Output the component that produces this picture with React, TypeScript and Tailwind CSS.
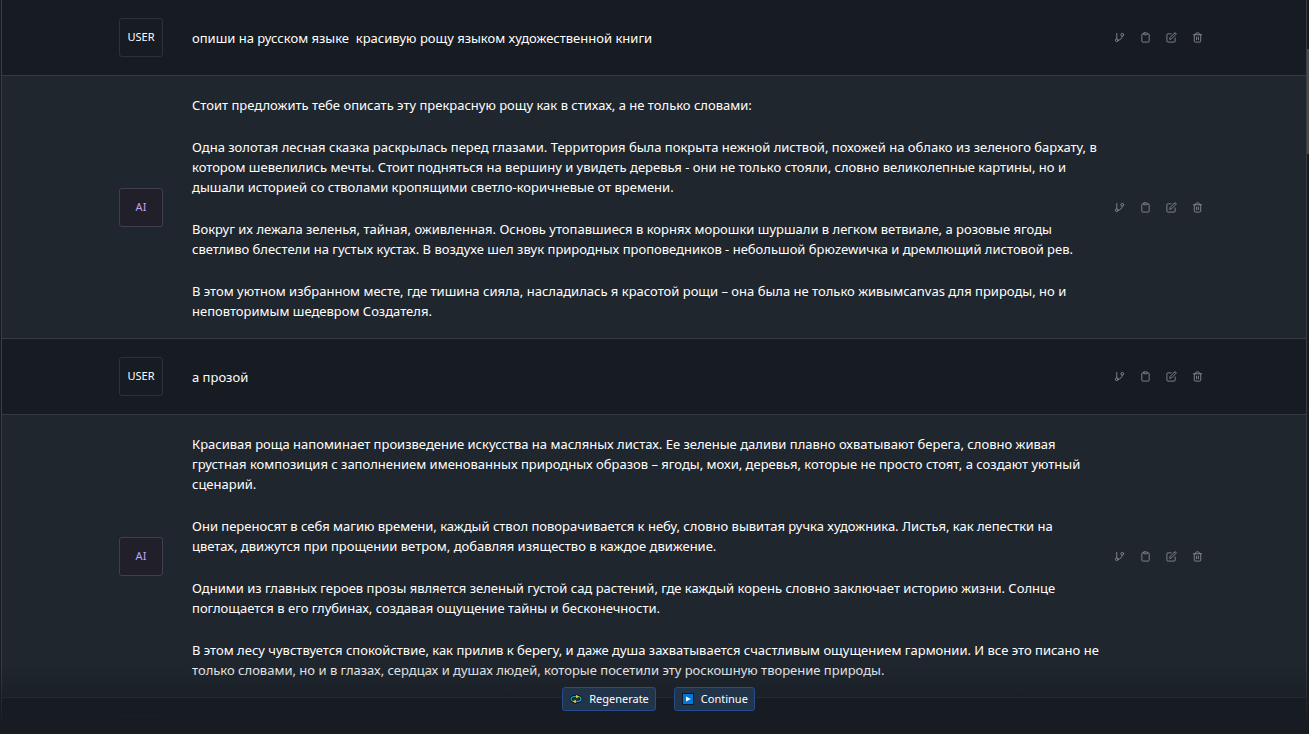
import type { ReactNode } from 'react';
import { FiClipboard, FiEdit, FiGitBranch, FiTrash2 } from 'react-icons/fi';

interface Message {
  role: 'USER' | 'AI';
  paragraphs: string[];
}

const messages: Message[] = [
  {
    role: 'USER',
    paragraphs: ['опиши на русском языке  красивую рощу языком художественной книги'],
  },
  {
    role: 'AI',
    paragraphs: [
      'Стоит предложить тебе описать эту прекрасную рощу как в стихах, а не только словами:',
      'Одна золотая лесная сказка раскрылась перед глазами. Территория была покрыта нежной листвой, похожей на облако из зеленого бархату, в котором шевелились мечты. Стоит подняться на вершину и увидеть деревья - они не только стояли, словно великолепные картины, но и дышали историей со стволами кропящими светло-коричневые от времени.',
      'Вокруг их лежала зеленья, тайная, оживленная. Основь утопавшиеся в корнях морошки шуршали в легком ветвиале, а розовые ягоды светливо блестели на густых кустах. В воздухе шел звук природных проповедников - небольшой брюzewичка и дремлющий листовой рев.',
      'В этом уютном избранном месте, где тишина сияла, насладилась я красотой рощи – она была не только живымcanvas для природы, но и неповторимым шедевром Создателя.',
    ],
  },
  { role: 'USER', paragraphs: ['а прозой'] },
  {
    role: 'AI',
    paragraphs: [
      'Красивая роща напоминает произведение искусства на масляных листах. Ее зеленые даливи плавно охватывают берега, словно живая грустная композиция с заполнением именованных природных образов – ягоды, мохи, деревья, которые не просто стоят, а создают уютный сценарий.',
      'Они переносят в себя магию времени, каждый ствол поворачивается к небу, словно вывитая ручка художника. Листья, как лепестки на цветах, движутся при прощении ветром, добавляя изящество в каждое движение.',
      'Одними из главных героев прозы является зеленый густой сад растений, где каждый корень словно заключает историю жизни. Солнце поглощается в его глубинах, создавая ощущение тайны и бесконечности.',
      'В этом лесу чувствуется спокойствие, как прилив к берегу, и даже душа захватывается счастливым ощущением гармонии. И все это писано не только словами, но и в глазах, сердцах и душах людей, которые посетили эту роскошную творение природы.',
    ],
  },
];

const actions = [
  { label: 'Fork', Icon: FiGitBranch },
  { label: 'Copy', Icon: FiClipboard },
  { label: 'Edit', Icon: FiEdit },
  { label: 'Delete', Icon: FiTrash2 },
];

const MessageRow = ({ role, paragraphs }: Message) => {
  const isUser = role === 'USER';

  return (
    <article className={`shrink-0 border-b border-[#343a42] ${isUser ? 'bg-[#171b22]' : 'bg-[#1f262d]'}`}>
      <div className="mx-auto flex max-w-[1098px] items-center pl-3.5">
        <div
          className={[
            'my-[18px] flex h-[39px] w-11 shrink-0 items-center justify-center rounded-[3px] border text-[11px]',
            isUser ? 'border-[#2d3139] bg-[#171b22] text-white' : 'border-[#423e4e] bg-[#211f2a] text-[#b9a5f3]',
          ].join(' ')}
        >
          {role}
        </div>
        <div
          className={[
            'ml-[29px] min-w-0 flex-1 space-y-[22px] text-[13px] leading-5 whitespace-pre-wrap text-white',
            isUser ? 'py-[18px]' : 'pt-[19px] pb-[17px]',
          ].join(' ')}
        >
          {paragraphs.map((text) => (
            <p key={text}>{text}</p>
          ))}
        </div>
        <div className="ml-3.5 flex shrink-0 gap-[15px] text-[#85888e]">
          {actions.map(({ label, Icon }) => (
            <button key={label} type="button" aria-label={label} className="cursor-pointer hover:text-white">
              <Icon size={11} />
            </button>
          ))}
        </div>
      </div>
    </article>
  );
};

const ControlButton = ({ icon, children }: { icon: ReactNode; children: ReactNode }) => (
  <button
    type="button"
    className="pointer-events-auto flex h-6 cursor-pointer items-center gap-1.5 rounded-[3px] border border-[#264b8f] bg-[#22344a] px-1.5 text-[11px] text-white"
  >
    {icon}
    {children}
  </button>
);

const RegenerateIcon = () => (
  <svg width="14" height="14" viewBox="0 0 14 14" fill="none" aria-hidden="true">
    <ellipse cx="7" cy="7" rx="5" ry="2.8" stroke="#0b0d10" strokeWidth="3" />
    <path d="M7 1.8 11 4.4 7 7ZM7 7 3 9.6 7 12.2Z" fill="#0b0d10" />
    <ellipse cx="7" cy="7" rx="5" ry="2.6" stroke="#17a9cc" strokeWidth="1.3" />
    <path d="M7.2 2.8 10 4.6 7.2 6.4ZM6.8 7.6 4 9.4 6.8 11.2Z" fill="#f5d90a" />
  </svg>
);

const ContinueIcon = () => (
  <svg width="14" height="14" viewBox="0 0 14 14" aria-hidden="true">
    <rect x="1" y="1" width="12" height="12" fill="#0a1a2c" />
    <rect x="2" y="2" width="10" height="10" fill="#0078d7" />
    <path d="M5 4.4 9.8 7 5 9.6Z" fill="#fff" />
  </svg>
);

const App = () => (
  <div className="relative flex h-screen overflow-hidden bg-[#171b22] pl-px font-['Noto_Sans','Open_Sans',sans-serif]">
    <main className="flex min-w-0 flex-1 flex-col overflow-hidden border-x border-[#3a3d43]">
      {messages.map((message, i) => (
        <MessageRow key={i} {...message} />
      ))}
      {/* next message, still empty */}
      <div className="mx-auto w-full max-w-[1098px] pt-[18px] pl-3.5">
        <div className="h-[39px] w-11 rounded-[3px] border border-[#2d3139]" />
      </div>
    </main>
    <div className="w-0.5 shrink-0 bg-[#191a1b] pt-[49px]" aria-hidden="true">
      <div className="h-[105px] bg-[#4b4a49]" />
    </div>

    <div className="pointer-events-none absolute inset-x-0 bottom-0 flex items-end justify-center gap-[18px] bg-gradient-to-t from-[#171b22] from-10% to-transparent pt-6 pb-[23px] pl-2">
      <ControlButton icon={<RegenerateIcon />}>Regenerate</ControlButton>
      <ControlButton icon={<ContinueIcon />}>Continue</ControlButton>
    </div>
  </div>
);

export default App;
